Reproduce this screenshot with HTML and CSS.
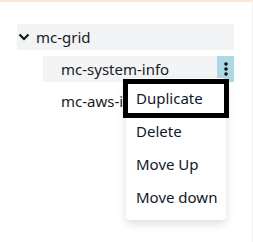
FILE: index.html
```html
<!DOCTYPE html>
<html lang="en">
<head>
    <meta charset="UTF-8">
    <meta name="viewport" content="width=device-width, initial-scale=1.0">
    <title>Tree</title>
    <link rel="stylesheet" href="styles.css">
</head>
<body>
    <div class="panel">
        <div class="tree">
            <div class="row root">
                <svg class="chevron" width="12" height="8" viewBox="0 0 12 8">
                    <path d="M1.5 1.5 L6 6 L10.5 1.5" fill="none" stroke="#111" stroke-width="2"/>
                </svg>
                <span>mc-grid</span>
            </div>
            <div class="children">
                <div class="row child active">
                    <span>mc-system-info</span>
                    <button class="kebab">
                        <svg width="4" height="14" viewBox="0 0 4 14">
                            <circle cx="2" cy="2" r="1.8" fill="#111"/>
                            <circle cx="2" cy="7" r="1.8" fill="#111"/>
                            <circle cx="2" cy="12" r="1.8" fill="#111"/>
                        </svg>
                    </button>
                    <ul class="menu">
                        <li class="focused">Duplicate</li>
                        <li>Delete</li>
                        <li>Move Up</li>
                        <li>Move down</li>
                    </ul>
                </div>
                <div class="row child">
                    <span>mc-aws-info</span>
                </div>
            </div>
        </div>
    </div>
</body>
</html>
```

FILE: styles.css
```css
body {
    margin: 0;
    font-family: "Noto Sans", "Open Sans", sans-serif;
    font-size: 15px;
    color: #1b1b1b;
    background: #fff;
}
.panel {
    height: 240px;
    border-top: 2px solid #fbe6da;
    border-right: 1px solid #f3f3f3;
}
.tree {
    padding: 22px 18px 0 17px;
}
.row {
    display: flex;
    align-items: center;
    height: 26px;
}
.root {
    background: #f1f3f5;
    padding-left: 1px;
}
.chevron {
    margin-right: 6px;
}
.children {
    margin-left: 26px;
    margin-top: 6px;
    display: flex;
    flex-direction: column;
    gap: 6px;
}
.child {
    position: relative;
    padding-left: 18px;
}
.child.active {
    background: #f3f4f6;
}
.kebab {
    margin-left: auto;
    width: 17px;
    height: 26px;
    border: none;
    padding: 0;
    background: #add8e6;
    display: flex;
    align-items: center;
    justify-content: center;
}
.menu {
    position: absolute;
    top: 22px;
    left: 83px;
    width: 100px;
    margin: 0;
    padding: 4px 0 6px;
    list-style: none;
    background: #fff;
    border-radius: 4px;
    box-shadow: 0 4px 10px rgba(0,0,0,0.13);
    z-index: 2;
}
.menu li {
    height: 33px;
    line-height: 33px;
    padding-left: 10px;
    color: #101828;
}
.menu li.focused {
    outline: 5px solid #000;
    outline-offset: -2px;
}
```
